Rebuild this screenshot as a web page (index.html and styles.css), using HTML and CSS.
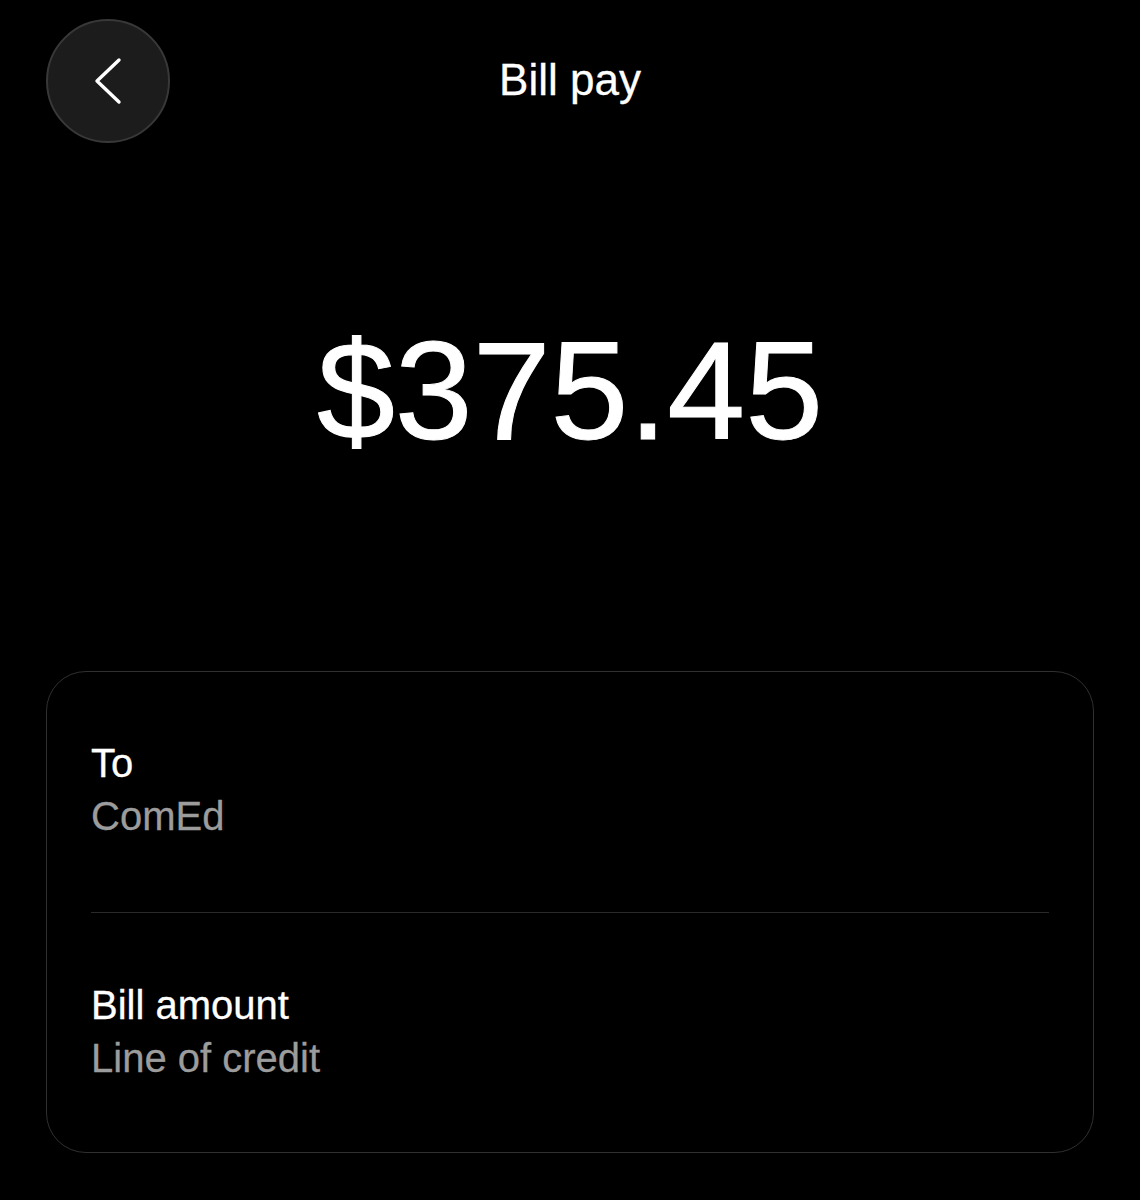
FILE: index.html
```html
<!DOCTYPE html>
<html lang="en">
<head>
    <meta charset="UTF-8">
    <meta name="viewport" content="width=device-width, initial-scale=1.0">
    <title>Bill pay</title>
    <link rel="stylesheet" href="styles.css">
</head>
<body>
    <div class="screen">
        <!-- Header section -->
        <div class="header">
            <button class="back-btn" aria-label="Back">
                <svg width="40" height="56" viewBox="0 0 40 56">
                    <polyline points="31,7 9,28 31,49" fill="none" stroke="#fff" stroke-width="3.4" stroke-linecap="round" stroke-linejoin="round"/>
                </svg>
            </button>
            <h1 class="title">Bill pay</h1>
        </div>

        <!-- Amount section -->
        <div class="amount">$375.45</div>

        <!-- Details card -->
        <div class="card">
            <div class="row">
                <div class="label">To</div>
                <div class="value">ComEd</div>
            </div>
            <div class="row">
                <div class="label">Bill amount</div>
                <div class="value">Line of credit</div>
            </div>
        </div>
    </div>
</body>
</html>
```

FILE: styles.css
```css
body {
    margin: 0;
    padding: 0;
    background-color: #000;
    color: #fff;
    font-family: "Liberation Sans", Arial, sans-serif;
}

.screen {
    width: 1140px;
    height: 1200px;
    box-sizing: border-box;
    padding: 19px 46px 0 46px;
}

.header {
    position: relative;
    height: 124px;
    display: flex;
    align-items: center;
    justify-content: center;
}

.back-btn {
    position: absolute;
    left: 0;
    top: 0;
    width: 124px;
    height: 124px;
    border-radius: 50%;
    background-color: #1c1c1c;
    border: 2px solid #383838;
    display: flex;
    align-items: center;
    justify-content: center;
    padding: 0 0 0 0;
    box-sizing: border-box;
    cursor: pointer;
}

.title {
    margin: 0;
    font-size: 44px;
    font-weight: normal;
    line-height: 1;
    margin-top: -2px;
    -webkit-text-stroke: 0.3px #fff;
}

.amount {
    margin-top: 178px;
    text-align: center;
    font-size: 140px;
    line-height: 140px;
    height: 140px;
    -webkit-text-stroke: 1px #fff;
}

.card {
    margin-top: 210px;
    border: 1.5px solid #303030;
    border-radius: 40px;
    padding: 0 44px;
}

.row {
    height: 240px;
    box-sizing: border-box;
    padding-top: 65px;
}

.row + .row {
    border-top: 1px solid #2a2a2a;
    padding-top: 66px;
}

.label,
.value {
    font-size: 40px;
    line-height: 53px;
    -webkit-text-stroke: 0.3px currentColor;
}

.value {
    color: #9c9c9c;
}
```
